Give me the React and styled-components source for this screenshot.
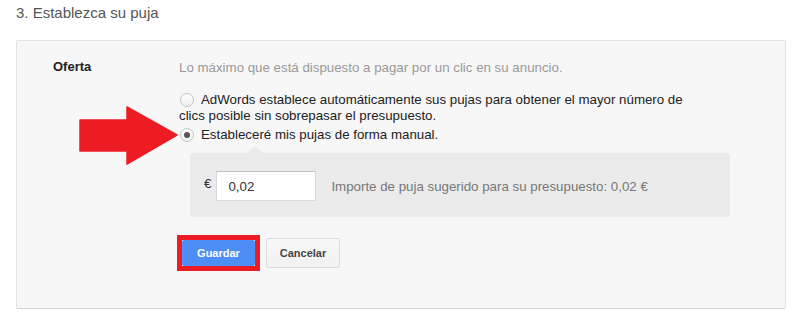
import React from 'react';
import styled, { createGlobalStyle } from 'styled-components';

const GlobalStyles = createGlobalStyle`
  body {
    margin: 0;
    padding: 0;
    background: #ffffff;
    font-family: Arial, "Liberation Sans", sans-serif;
    font-size: 13.3px;
    color: #222;
  }
`;

const Page = styled.div`
  padding: 0 15px 0 16px;
`;

const Title = styled.h2`
  margin: 4px 0 0;
  font-size: 15px;
  line-height: 18px;
  font-weight: normal;
  color: #555;
  height: 36px;
`;

const Panel = styled.section`
  position: relative;
  width: 768px;
  box-sizing: content-box;
  background: #f7f7f7;
  border: 1px solid #e2e2e2;
  border-bottom-color: #d6d6d6;
  border-radius: 2px;
  padding: 19px 0 37px;
  display: grid;
  grid-template-columns: 162px 1fr;
`;

const Label = styled.div`
  padding-left: 36px;
  font-size: 13px;
  font-weight: bold;
  line-height: 16px;
  color: #222;
  margin-top: -1px;
`;

const Content = styled.div`
  display: flex;
  flex-direction: column;
  align-items: flex-start;
`;

const Hint = styled.div`
  line-height: 16px;
  color: #999;
  margin-bottom: 16px;
`;

const Option = styled.label`
  display: block;
  width: 525px;
  line-height: 16px;
  color: #222;
  margin-top: ${p => (p.$first ? 0 : 3)}px;
`;

const Radio = styled.span`
  display: inline-block;
  position: relative;
  box-sizing: border-box;
  width: 14px;
  height: 14px;
  margin: 0 7px 0 1px;
  vertical-align: -3px;
  border-radius: 50%;
  border: 1px solid #c4c4c4;
  background: linear-gradient(#ffffff, #eeeeee);

  &::after {
    content: '';
    display: ${p => (p.$checked ? 'block' : 'none')};
    position: absolute;
    left: 3px;
    top: 3px;
    width: 6px;
    height: 6px;
    border-radius: 50%;
    background: #555;
  }
`;

const Manual = styled.div`
  position: relative;
  box-sizing: border-box;
  margin: 10px 0 0 11px;
  width: 540px;
  padding: 18px 14px 16px;
  background: #ebebeb;
  border-radius: 3px;
  display: flex;
  align-items: center;

  &::before {
    content: '';
    position: absolute;
    top: -7px;
    left: 57px;
    border-left: 8px solid transparent;
    border-right: 8px solid transparent;
    border-bottom: 7px solid #ebebeb;
  }
`;

const Currency = styled.span`
  color: #333;
  margin-right: 5px;
  margin-top: -6px;
`;

const BidInput = styled.input`
  box-sizing: border-box;
  width: 100px;
  height: 30px;
  padding: 0 11px;
  border: 1px solid #d9d9d9;
  border-top-color: #c0c0c0;
  background: #fff;
  font: 13.3px Arial, "Liberation Sans", sans-serif;
  color: #333;
  outline: none;
`;

const Suggestion = styled.span`
  margin-left: 15px;
  color: #777;
`;

const Actions = styled.div`
  display: flex;
  align-items: center;
  gap: 6px;
  margin: 18px 0 0 -2px;
`;

const Highlight = styled.span`
  display: inline-flex;
  border: 5px solid #ed1c24;
`;

const Button = styled.button`
  box-sizing: border-box;
  height: ${p => (p.$primary ? 26 : 30)}px;
  width: ${p => (p.$primary ? 73 : 74)}px;
  padding: 0;
  border-radius: 2px;
  border: 1px solid ${p => (p.$primary ? '#4d90fe' : '#dcdcdc')};
  background: ${p => (p.$primary ? '#4d8ef6' : 'linear-gradient(#f8f8f8, #f1f1f1)')};
  color: ${p => (p.$primary ? '#fff' : '#444')};
  font: bold 11px Arial, "Liberation Sans", sans-serif;
  cursor: pointer;
`;

const Arrow = styled.svg`
  position: absolute;
  left: 62px;
  top: 65px;
`;

const RedArrow = () => (
  <Arrow width="99" height="59" viewBox="-1 -1 99 59">
    <polygon
      points="0,13 47,13 47,0 97,28 47,57 47,44 0,44"
      fill="#ed1c24"
      stroke="#ed1c24"
      strokeWidth="1.5"
      strokeLinejoin="round"
    />
  </Arrow>
);

const App = () => (
  <>
    <GlobalStyles />
    <Page>
      <Title>3. Establezca su puja</Title>
      <Panel>
        <Label>Oferta</Label>
        <Content>
          <Hint>Lo máximo que está dispuesto a pagar por un clic en su anuncio.</Hint>
          <Option $first>
            <Radio />
            AdWords establece automáticamente sus pujas para obtener el mayor número de clics posible sin sobrepasar el presupuesto.
          </Option>
          <Option>
            <Radio $checked />
            Estableceré mis pujas de forma manual.
          </Option>
          <Manual>
            <Currency>€</Currency>
            <BidInput defaultValue="0,02" />
            <Suggestion>Importe de puja sugerido para su presupuesto: 0,02 €</Suggestion>
          </Manual>
          <Actions>
            <Highlight>
              <Button $primary>Guardar</Button>
            </Highlight>
            <Button>Cancelar</Button>
          </Actions>
        </Content>
        <RedArrow />
      </Panel>
    </Page>
  </>
);

export default App;
